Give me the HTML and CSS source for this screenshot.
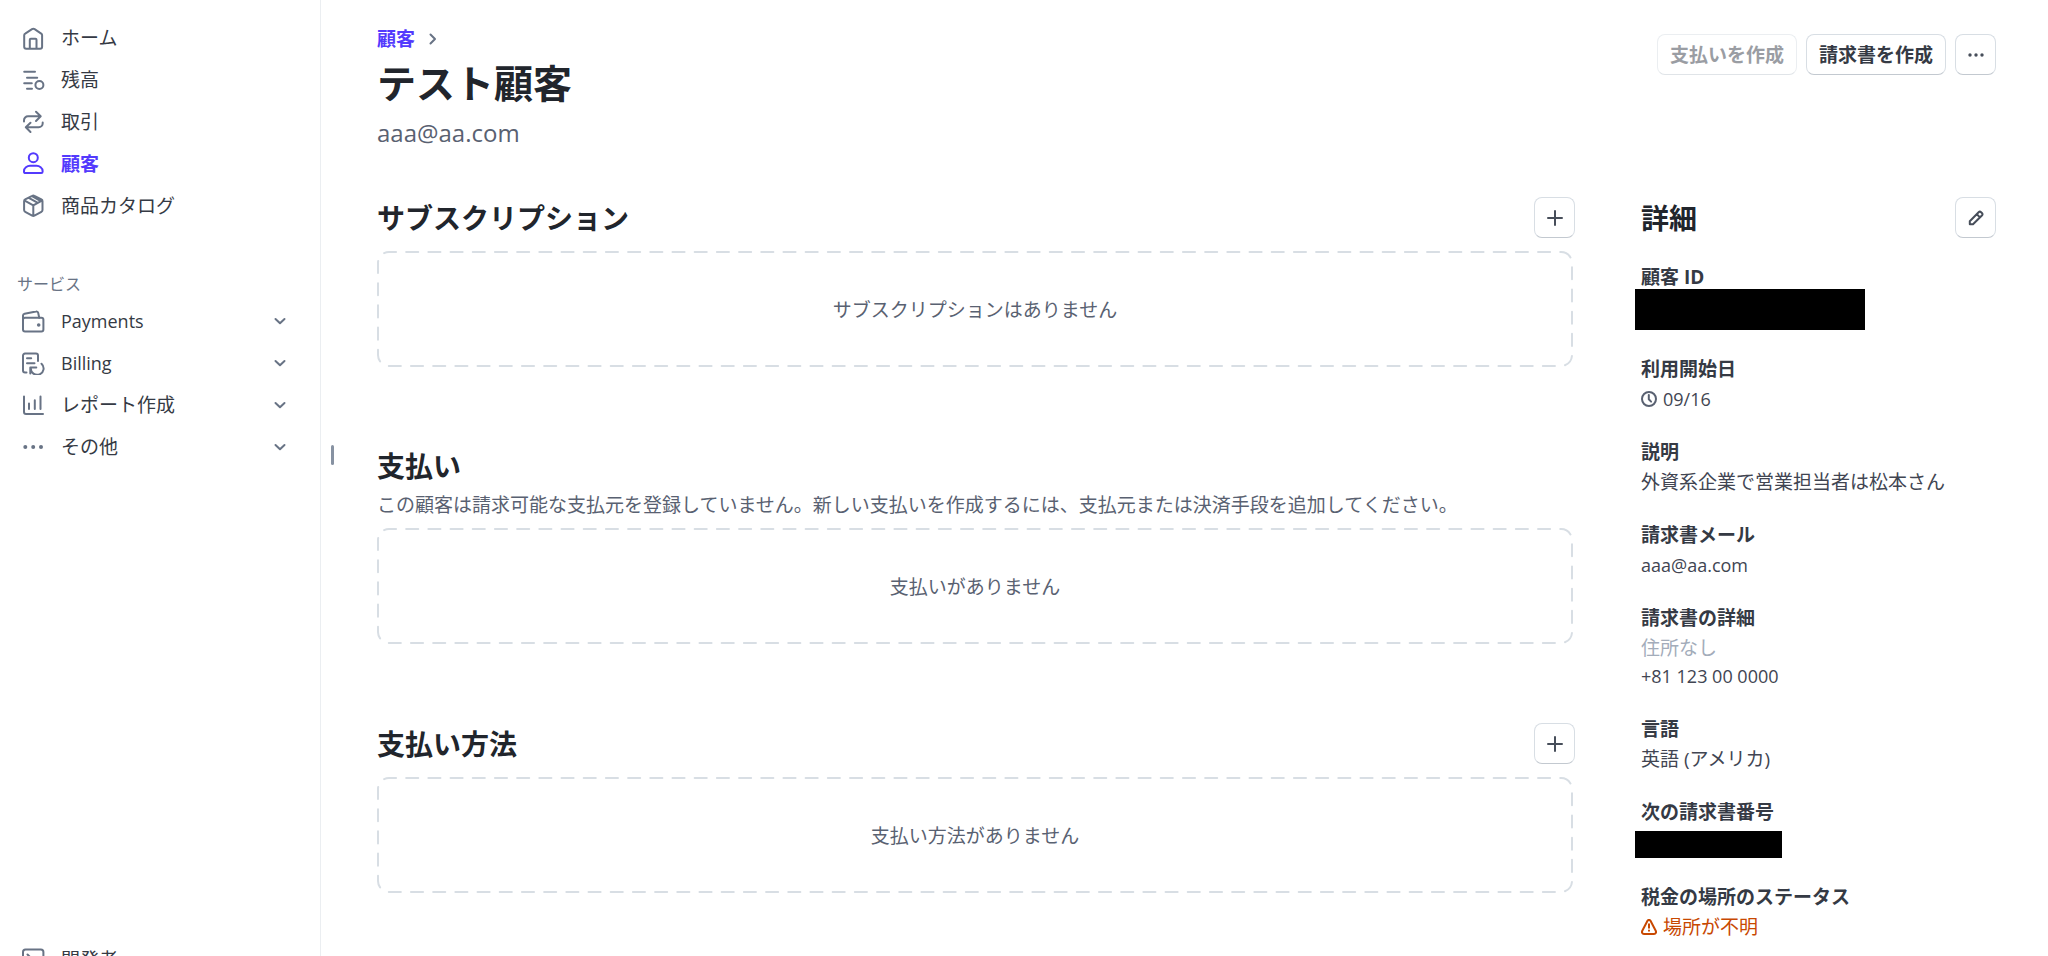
FILE: index.html
```html
<!DOCTYPE html>
<html lang="ja">
<head>
<meta charset="utf-8">
<title>テスト顧客</title>
<link rel="stylesheet" href="styles.css">
</head>
<body>
<div class="app">
  <aside class="sidebar">
    <nav class="nav">
      <a class="nav-link" href="#"><svg class="nav-icon" viewBox="0 0 24 24"><path d="M3.2 7.6 10 3.2a2.4 2.4 0 0 1 2.6 0l6.6 4.4a2 2 0 0 1 .9 1.7v11.4a2 2 0 0 1-2 2H4.200a2 2 0 0 1-2-2V9.300a2 2 0 0 1 1-1.700ZM7.800 22.500v-8.700a1 1 0 0 1 1-1h4.700a1 1 0 0 1 1 1v8.700"/></svg>ホーム</a>
      <a class="nav-link" href="#"><svg class="nav-icon" viewBox="0 0 24 24"><path d="M2.200 3.800h10.800M5 9.700h10.200M2.200 15.200h7.600M5 20.700h5"/><circle cx="17.400" cy="17" r="4"/></svg>残高</a>
      <a class="nav-link" href="#"><svg class="nav-icon" viewBox="0 0 24 24"><path d="M2 11.500v-1.200a4 4 0 0 1 4-4h12.500M14 1.700l4.700 4.600L14 11M20.700 12.500v.8a4 4 0 0 1-4 4H4.200M8.500 12.700l-4.700 4.600L8.500 22"/></svg>取引</a>
      <a class="nav-link current" href="#" aria-current="page"><svg class="nav-icon" viewBox="0 0 24 24"><circle cx="11.300" cy="5.700" r="4.500"/><path d="M2 19c0-3 3.200-5.200 6-5.200h6.600c2.800 0 6 2.200 6 5.200v.8a1.300 1.300 0 0 1-1.300 1.300H3.300A1.300 1.300 0 0 1 2 19.800Z"/></svg>顧客</a>
      <a class="nav-link" href="#"><svg class="nav-icon" viewBox="0 0 24 24"><path d="M10.200 1.800a2.300 2.300 0 0 1 2.200 0l7 3.600a2 2 0 0 1 1.100 1.800v8.800a2 2 0 0 1-1.100 1.800l-7 3.800a2.300 2.300 0 0 1-2.200 0l-7-3.800A2 2 0 0 1 2.100 16V7.200a2 2 0 0 1 1.100-1.800ZM2.700 6.600l8.600 4.700 8.600-4.700M11.300 11.500V22M6.800 3.800l8.600 4.900M10 2.200l7.500 4.200"/></svg>商品カタログ</a>
    </nav>
    <nav class="nav services" aria-labelledby="services-title">
      <h2 class="nav-title" id="services-title">サービス</h2>
      <button class="nav-link" type="button"><svg class="nav-icon" viewBox="0 0 24 24"><rect x="1" y="8.800" width="20.400" height="13.800" rx="2"/><path d="M1 11V6.800a2 2 0 0 1 1.600-2L14 2.500a1.800 1.800 0 0 1 2.200 1.400l1 4.900"/><circle class="solid" cx="16.700" cy="16" r="1.800"/></svg><span class="latin">Payments</span><svg class="chevron" viewBox="0 0 12 12"><path d="M1.500 4 6 8.300 10.500 4"/></svg></button>
      <button class="nav-link" type="button"><svg class="nav-icon" viewBox="0 0 24 24"><path d="M4.500 21.500H3a2 2 0 0 1-2-2V4.600a2 2 0 0 1 2-2h11a2 2 0 0 1 2 2V10M5 7.300h4.200M5 12.200h7.500M8.300 22.500v-6h6M8.800 17a6.400 6.400 0 1 0 10.700-4.300"/></svg><span class="latin">Billing</span><svg class="chevron" viewBox="0 0 12 12"><path d="M1.500 4 6 8.300 10.500 4"/></svg></button>
      <button class="nav-link" type="button"><svg class="nav-icon" viewBox="0 0 24 24"><path d="M2 3.500V19a2 2 0 0 0 2 2h17M7 10.500V16M12.800 7.300V16M18.500 3.500V16"/></svg>レポート作成<svg class="chevron" viewBox="0 0 12 12"><path d="M1.500 4 6 8.300 10.500 4"/></svg></button>
      <button class="nav-link" type="button"><svg class="nav-icon" viewBox="0 0 24 24"><g class="solid"><circle cx="3.300" cy="12" r="2"/><circle cx="11.200" cy="12" r="2"/><circle cx="19" cy="12" r="2"/></g></svg>その他<svg class="chevron" viewBox="0 0 12 12"><path d="M1.500 4 6 8.300 10.500 4"/></svg></button>
    </nav>
    <nav class="nav developers">
      <a class="nav-link" href="#"><svg class="nav-icon" viewBox="0 0 24 24"><rect x="1" y="1.500" width="20.400" height="19" rx="2.500"/><path d="m5.500 6.500 3.500 3.500-3.500 3.500M11.500 14h5"/></svg>開発者</a>
    </nav>
  </aside>
  <div class="resizer" role="separator" aria-orientation="vertical"></div>

  <main class="main">
    <header class="page-header">
      <div>
        <nav class="breadcrumb"><a href="#">顧客</a><svg class="crumb-arrow" viewBox="0 0 12 12"><path d="M3.500 1.500 8 6l-4.500 4.500"/></svg></nav>
        <h1 class="page-title">テスト顧客</h1>
        <p class="page-email">aaa@aa.com</p>
      </div>
      <div class="actions">
        <button class="button" type="button" disabled>支払いを作成</button>
        <button class="button" type="button">請求書を作成</button>
        <button class="button icon-button" type="button" aria-label="その他の操作"><svg class="icon" viewBox="0 0 16 16"><g class="solid"><circle cx="2" cy="8" r="1.700"/><circle cx="8" cy="8" r="1.700"/><circle cx="14" cy="8" r="1.700"/></g></svg></button>
      </div>
    </header>

    <div class="columns">
      <div class="sections">
        <section>
          <div class="section-header">
            <h2 class="section-title">サブスクリプション</h2>
            <button class="button icon-button" type="button" aria-label="サブスクリプションを追加"><svg class="icon" viewBox="0 0 16 16"><path d="M8 1v14M1 8h14"/></svg></button>
          </div>
          <div class="empty"><svg class="dashes"><rect class="dash-line" x="1" y="1" rx="11" pathLength="2574"/></svg>サブスクリプションはありません</div>
        </section>
        <section>
          <div class="section-intro">
            <h2 class="section-title">支払い</h2>
            <p class="section-note">この顧客は請求可能な支払元を登録していません。新しい支払いを作成するには、支払元または決済手段を追加してください。</p>
          </div>
          <div class="empty"><svg class="dashes"><rect class="dash-line" x="1" y="1" rx="11" pathLength="2574"/></svg>支払いがありません</div>
        </section>
        <section>
          <div class="section-header">
            <h2 class="section-title">支払い方法</h2>
            <button class="button icon-button" type="button" aria-label="支払い方法を追加"><svg class="icon" viewBox="0 0 16 16"><path d="M8 1v14M1 8h14"/></svg></button>
          </div>
          <div class="empty"><svg class="dashes"><rect class="dash-line" x="1" y="1" rx="11" pathLength="2574"/></svg>支払い方法がありません</div>
        </section>
      </div>

      <section class="details">
        <div class="details-header">
          <h2 class="section-title">詳細</h2>
          <button class="button icon-button" type="button" aria-label="詳細を編集"><svg class="icon" viewBox="0 0 16 16"><path d="M1.800 14.200v-3L10.600 2.200a1.800 1.800 0 0 1 2.500 0l.8.800a1.800 1.800 0 0 1 0 2.500L5 14.200ZM8.800 4.200l3.200 3.200"/></svg></button>
        </div>
        <dl class="detail-list">
          <div><dt>顧客 ID</dt><dd class="redacted redacted-id"></dd></div>
          <div><dt>利用開始日</dt><dd class="with-icon"><svg class="icon clock" viewBox="0 0 16 16"><circle cx="8" cy="8" r="7"/><path d="M7.800 4v4.300l2.300 2.300"/></svg><span class="latin">09/16</span></dd></div>
          <div><dt>説明</dt><dd>外資系企業で営業担当者は松本さん</dd></div>
          <div><dt>請求書メール</dt><dd class="latin">aaa@aa.com</dd></div>
          <div><dt>請求書の詳細</dt><dd class="muted">住所なし</dd><dd class="latin">+81 123 00 0000</dd></div>
          <div><dt>言語</dt><dd>英語 (アメリカ)</dd></div>
          <div><dt>次の請求書番号</dt><dd class="redacted redacted-number"></dd></div>
          <div><dt>税金の場所のステータス</dt><dd class="with-icon warning"><svg class="icon" viewBox="0 0 16 16"><path d="M6.500 1.800a1.700 1.700 0 0 1 3 0l5.200 9.900c.8 1.600.2 3.200-1.700 3.200H3c-1.900 0-2.500-1.600-1.700-3.200ZM8 5.200v3.600M8 11.400v.4"/></svg>場所が不明</dd></div>
        </dl>
      </section>
    </div>
  </main>
</div>
</body>
</html>
```
FILE: styles.css
```css
* {
  box-sizing: border-box;
}

body,
h1,
h2,
p,
dl,
dd {
  margin: 0;
}

body {
  color: #414552;
  background: #fff;
  font-family: "Open Sans", "Noto Sans CJK JP", sans-serif;
  font-size: 19px;
  line-height: 28px;
}

button {
  font: inherit;
  color: inherit;
}

svg {
  flex: none;
  fill: none;
  stroke: currentColor;
  stroke-width: 2;
  stroke-linecap: round;
  stroke-linejoin: round;
}

.solid {
  fill: currentColor;
  stroke: none;
}

.app {
  display: flex;
  height: 100vh;
  overflow: hidden;
}

/* Sidebar */

.sidebar {
  flex: none;
  display: flex;
  flex-direction: column;
  width: 321px;
  height: calc(100vh + 25px);
  padding-top: 17px;
  border-right: 1px solid #ebeef1;
}

.nav {
  display: flex;
  flex-direction: column;
}

.nav-link {
  display: flex;
  align-items: center;
  gap: 15px;
  height: 42px;
  padding: 0 34px 0 22px;
  border: 0;
  background: none;
  color: #353a44;
  text-align: left;
  text-decoration: none;
}

.nav-icon {
  width: 24px;
  height: 24px;
  color: #687385;
}

.current,
.current .nav-icon {
  color: #533afd;
}

.current {
  font-weight: 700;
}

.chevron {
  width: 12px;
  height: 12px;
  margin-left: auto;
  color: #687385;
}

.services {
  margin-top: 41px;
}

.nav-title {
  padding-left: 17px;
  color: #687385;
  font-size: 16px;
  font-weight: 400;
  line-height: 32px;
}

.developers {
  margin-top: auto;
}

.resizer {
  flex: none;
  align-self: center;
  width: 3px;
  height: 20px;
  margin: 0 43px 46px 10px;
  border-radius: 2px;
  background: #8792a2;
}

/* Page header */

.main {
  flex: 1;
  min-width: 0;
  padding: 25px 52px 0 0;
}

.page-header {
  display: flex;
  justify-content: space-between;
  align-items: flex-start;
}

.breadcrumb {
  display: flex;
  align-items: center;
  gap: 12px;
}

.breadcrumb a {
  color: #533afd;
  font-weight: 700;
  text-decoration: none;
}

.crumb-arrow {
  width: 12px;
  height: 12px;
  color: #687385;
}

.page-title {
  margin-top: 4px;
  color: #21252c;
  font-size: 39px;
  line-height: 52px;
}

.page-email {
  margin-top: 8px;
  color: #596171;
  font-size: 24px;
  line-height: 32px;
}

.actions {
  display: flex;
  gap: 9px;
  margin-top: 9px;
}

.button {
  display: flex;
  justify-content: center;
  align-items: center;
  height: 41px;
  padding: 1px 12px 0;
  border: 1px solid #d8dee4;
  border-bottom-color: #c3c9d0;
  border-radius: 8px;
  background: #fff;
  color: #353a44;
  font-weight: 700;
}

.button:disabled {
  border-color: #ebeef1;
  border-bottom-color: #e0e4e8;
  color: #9a9da3;
}

.icon-button {
  width: 41px;
  padding: 0;
  color: #474e5a;
}

.icon {
  width: 16px;
  height: 16px;
}

/* Sections */

.columns {
  display: grid;
  grid-template-columns: minmax(0, 1fr) 355px;
  gap: 66px;
  margin-top: 48px;
}

.sections {
  display: flex;
  flex-direction: column;
  gap: 79px;
}

.section-header,
.details-header {
  display: flex;
  justify-content: space-between;
  align-items: center;
}

.section-title {
  color: #21252c;
  font-size: 28px;
  line-height: 36px;
}

.section-intro {
  padding-top: 2px;
}

.section-note {
  margin: 7px 0 -4px;
  color: #596171;
}

.empty {
  position: relative;
  display: flex;
  justify-content: center;
  align-items: center;
  height: 116px;
  margin: 13px 2px 0 0;
  padding-top: 2px;
  color: #596171;
}

.dashes {
  position: absolute;
  inset: 0;
  width: 100%;
  height: 100%;
  color: #d8dee4;
}

.dash-line {
  width: calc(100% - 2px);
  height: calc(100% - 2px);
  stroke-dasharray: 12 10;
  stroke-dashoffset: 5;
}

/* Details */

.detail-list {
  display: flex;
  flex-direction: column;
  gap: 25px;
  margin-top: 25px;
}

.detail-list dt {
  margin-bottom: 2px;
  color: #353a44;
  font-weight: 700;
}

.latin {
  font-size: 18px;
}

.muted {
  color: #a3acba;
}

.with-icon {
  display: flex;
  align-items: center;
  gap: 6px;
}

.clock {
  color: #596171;
}

.warning {
  color: #c84801;
}

.redacted {
  margin-left: -6px;
  background: #000;
}

.redacted-id {
  width: 230px;
  height: 41px;
  margin-top: -4px;
}

.redacted-number {
  width: 147px;
  height: 27px;
  margin-top: 5px;
}
```
